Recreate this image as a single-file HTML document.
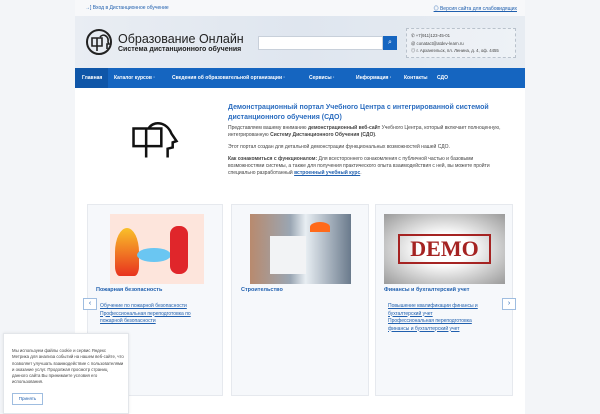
<!DOCTYPE html>
<html><head><meta charset="utf-8"><style>
*{margin:0;padding:0;box-sizing:border-box}
body{width:600px;height:414px;overflow:hidden;background:#f3f5f8;font-family:"Liberation Sans","Noto Sans CJK SC",sans-serif;position:relative;color:#333}
.wrap{position:absolute;left:75px;top:0;width:450px;height:414px;background:#fff}
.top{position:absolute;left:0;top:0;width:450px;height:16px;background:#f7f8fa;font-size:5px;color:#1f5fae}
.hdr{position:absolute;left:0;top:16px;width:450px;height:52px;background:linear-gradient(90deg,#e9edf3,#dfe6ef 50%,#e7ecf2)}
.nav{position:absolute;left:0;top:68px;width:450px;height:20px;background:#1565c0;font-size:5px;color:#fff;font-weight:bold}
.nav span{position:absolute;top:7px}
.card{position:absolute;top:204px;height:192px;background:#f6f8fb;border:1px solid #e6e9ee}
.card .t{position:absolute;top:82px;font-size:5.5px;color:#1f5fae;font-weight:bold}
.lk{position:absolute;font-size:5px;color:#1f5fae;text-decoration:underline;line-height:7.5px}
.arr{position:absolute;top:298px;width:14px;height:12px;border:1px solid #9fbde0;background:#fff;color:#1f5fae;font-size:7px;text-align:center;line-height:10px}
p{font-size:5px;line-height:7px;color:#444}
</style></head><body>
<div class="wrap">
<div class="top"><span style="position:absolute;left:10px;top:5px">→] Вход в Дистанционное обучение</span><span style="position:absolute;right:8px;top:5px;text-decoration:underline">◎ Версия сайта для слабовидящих</span></div>
<div class="hdr">
<svg style="position:absolute;left:10px;top:12px" width="28" height="28" viewBox="0 0 28 28"><circle cx="14" cy="14" r="12" fill="none" stroke="#222" stroke-width="2"/><path d="M7 10h5v8H7zM12 10h5v8h-5M12 18v5M15 9c3-4 9-1 8 5l1 2h-2v5" fill="none" stroke="#222" stroke-width="1.6"/></svg>
<div style="position:absolute;left:43px;top:16px;font-size:12.5px;color:#222">Образование Онлайн</div>
<div style="position:absolute;left:43px;top:30px;font-size:7px;font-weight:bold;color:#222">Система дистанционного обучения</div>
<div style="position:absolute;left:183px;top:20px;width:125px;height:14px;background:#fff;border:1px solid #c8d0da"></div>
<div style="position:absolute;left:308px;top:20px;width:14px;height:14px;background:#1565c0;color:#fff;font-size:7px;text-align:center;line-height:14px">⌕</div>
<div style="position:absolute;left:331px;top:12px;width:110px;height:30px;border:1px dashed #b9c2cc;font-size:4.3px;color:#444;padding:3px 4px;line-height:7.5px;background:rgba(255,255,255,.3)">✆ +7(911)123-45-01<br>@ conatact@atdev-learn.ru<br>◎ г. Архангельск, пл. Ленина, д. 4, оф. 4455</div>
</div>
<div class="nav"><div style="position:absolute;left:0;top:0;width:33px;height:20px;background:#0f56a8"></div>
<span style="left:7px">Главная</span><span style="left:39px">Каталог курсов ·</span><span style="left:97px">Сведения об образовательной организации ·</span><span style="left:234px">Сервисы ·</span><span style="left:281px">Информация ·</span><span style="left:329px">Контакты</span><span style="left:362px">СДО</span></div>
<svg style="position:absolute;left:56px;top:122px" width="48" height="42" viewBox="0 0 38 33"><path d="M2 5h10v14H2zM12 5h12v14H12M12 19v9M14 5c3-6 14-6 18 4l4 6-3 1v4l-4 1v7" fill="none" stroke="#111" stroke-width="2"/></svg>
<div style="position:absolute;left:153px;top:103px;width:275px;font-size:7px;font-weight:bold;color:#2a6cbf;line-height:10px">Демонстрационный портал Учебного Центра с интегрированной системой дистанционного обучения (СДО)</div>
<div style="position:absolute;left:153px;top:125px;width:280px">
<p>Представляем вашему вниманию <b>демонстрационный веб-сайт</b> Учебного Центра, который включает полноценную, интегрированную <b>Систему Дистанционного Обучения (СДО)</b>.</p>
<p style="margin-top:5px">Этот портал создан для детальной демонстрации функциональных возможностей нашей СДО.</p>
<p style="margin-top:5px"><b>Как ознакомиться с функционалом:</b> Для всестороннего ознакомления с публичной частью и базовыми возможностями системы, а также для получения практического опыта взаимодействия с ней, вы можете пройти специально разработанный <b style="color:#1f5fae;text-decoration:underline">встроенный учебный курс</b>.</p></div>
<div class="card" style="left:12px;width:136px"><div style="position:absolute;left:22px;top:9px;width:94px;height:70px;background:#fde5dc"><div style="position:absolute;left:5px;top:14px;width:24px;height:48px;background:linear-gradient(#f9c02a,#e8321e);border-radius:50% 50% 20% 20%"></div><div style="position:absolute;left:27px;top:34px;width:34px;height:14px;background:#6ac6f2;border-radius:50%"></div><div style="position:absolute;left:60px;top:12px;width:18px;height:48px;background:#e0262b;border-radius:8px"></div></div><div class="t" style="left:8px">Пожарная безопасность</div></div>
<div class="card" style="left:156px;width:138px"><div style="position:absolute;left:18px;top:9px;width:101px;height:70px;background:linear-gradient(90deg,#b88a6e,#9aa6b3 40%,#e8eef3 55%,#6a7a8c)"><div style="position:absolute;left:20px;top:22px;width:36px;height:38px;background:#f2f3f5"></div><div style="position:absolute;left:60px;top:8px;width:20px;height:10px;background:#ff6a1a;border-radius:50% 50% 0 0"></div></div><div class="t" style="left:9px">Строительство</div></div>
<div class="card" style="left:300px;width:138px"><div style="position:absolute;left:8px;top:9px;width:121px;height:70px;background:radial-gradient(#fff 30%,#9a9a9a)"><div style="position:absolute;left:14px;top:20px;width:93px;height:30px;border:2px solid #a52322;color:#a52322;font:bold 22px 'Liberation Serif',serif;text-align:center;line-height:26px">DEMO</div></div><div class="t" style="left:8px">Финансы и бухгалтерский учет</div></div>
<div class="lk" style="left:25px;top:303px;width:110px">Обучение по пожарной безопасности<br>Профессиональная переподготовка по пожарной безопасности</div>
<div class="lk" style="left:313px;top:303px;width:105px">Повышение квалификации финансы и бухгалтерский учет<br>Профессиональная переподготовка финансы и бухгалтерский учет</div>
</div>
<div class="arr" style="left:83px">‹</div><div class="arr" style="left:502px">›</div>
<div style="position:absolute;left:3px;top:333px;width:126px;height:81px;background:#fff;border:1px solid #e3e6ea;box-shadow:0 0 3px rgba(0,0,0,.08)">
<p style="position:absolute;left:8px;top:14px;width:112px;font-size:4.3px;line-height:6.3px;color:#444">Мы используем файлы cookie и сервис Яндекс Метрика для анализа событий на нашем веб-сайте, что позволяет улучшать взаимодействие с пользователями и оказание услуг. Продолжая просмотр страниц данного сайта Вы принимаете условия его использования.</p>
<div style="position:absolute;left:8px;top:59px;width:31px;height:12px;border:1px solid #9fbde0;font-size:4.5px;color:#1f5fae;text-align:center;line-height:10px">Принять</div></div>
</body></html>
